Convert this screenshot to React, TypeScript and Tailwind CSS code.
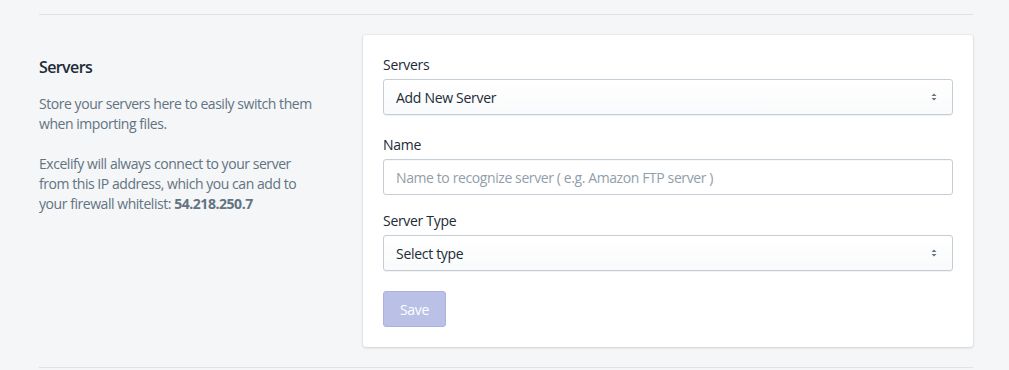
import React from "react";

function Arrows() {
  return (
    <svg width="8" height="12" viewBox="0 0 8 12" className="absolute right-[14px] top-1/2 -translate-y-1/2">
      <path d="M4 2.5 L6.5 5 H1.5 Z" fill="#637381" />
      <path d="M4 9.5 L6.5 7 H1.5 Z" fill="#637381" />
    </svg>
  );
}

function Select({ value }: { value: string }) {
  return (
    <div className="relative h-[36px] rounded-[3px] border border-[#c4cdd5] bg-gradient-to-b from-white to-[#f9fafb] shadow-[0_1px_0_0_rgba(22,29,37,0.05)] flex items-center pl-[12px] text-[14px] text-[#212b36] tracking-[-0.3px]">
      {value}
      <Arrows />
    </div>
  );
}

export default function App() {
  return (
    <div
      className="w-[1009px] h-[370px] bg-[#f4f6f8] overflow-hidden"
      style={{ fontFamily: '"Open Sans", "Noto Sans", sans-serif' }}
    >
      <div className="ml-[39px] mr-[36px] pt-[14px]">
        <div className="border-t border-[#dfe3e8] pt-[20px] pb-[20px] border-b flex">
          <div className="w-[324px] shrink-0 pt-[20px]">
            <h2 className="text-[16px] leading-[24px] font-semibold text-[#212b36] tracking-[-0.6px]">Servers</h2>
            <p className="mt-[15px] text-[14px] leading-[20px] text-[#637381] whitespace-nowrap tracking-[-0.45px]">
              Store your servers here to easily switch them
              <br />
              when importing files.
            </p>
            <p className="mt-[20px] text-[14px] leading-[20px] text-[#637381] whitespace-nowrap tracking-[-0.45px]">
              Excelify will always connect to your server
              <br />
              from this IP address, which you can add to
              <br />
              your firewall whitelist: <span className="font-bold">54.218.250.7</span>
            </p>
          </div>
          <div className="flex-1 bg-white rounded-[3px] shadow-[0_0_0_1px_rgba(63,63,68,0.05),0_1px_3px_0_rgba(63,63,68,0.15)] p-[20px]">
            <label className="block text-[14px] leading-[20px] text-[#212b36] mb-[4px] tracking-[-0.3px]">Servers</label>
            <Select value="Add New Server" />
            <label className="block mt-[20px] text-[14px] leading-[20px] text-[#212b36] mb-[4px] tracking-[-0.3px]">Name</label>
            <div className="h-[36px] rounded-[3px] border border-[#c4cdd5] bg-white shadow-[inset_0_1px_0_0_rgba(99,115,129,0.05)] flex items-center pl-[12px] text-[14px] text-[#919eab] tracking-[-0.4px]">
              Name to recognize server ( e.g. Amazon FTP server )
            </div>
            <label className="block mt-[16px] text-[14px] leading-[20px] text-[#212b36] mb-[4px] tracking-[-0.3px]">Server Type</label>
            <Select value="Select type" />
            <button className="mt-[20px] h-[36px] w-[63px] rounded-[3px] border border-[#abb1e0] bg-[#bbc0e6] text-white text-[14px] tracking-[-0.3px]">
              Save
            </button>
          </div>
        </div>
      </div>
    </div>
  );
}
